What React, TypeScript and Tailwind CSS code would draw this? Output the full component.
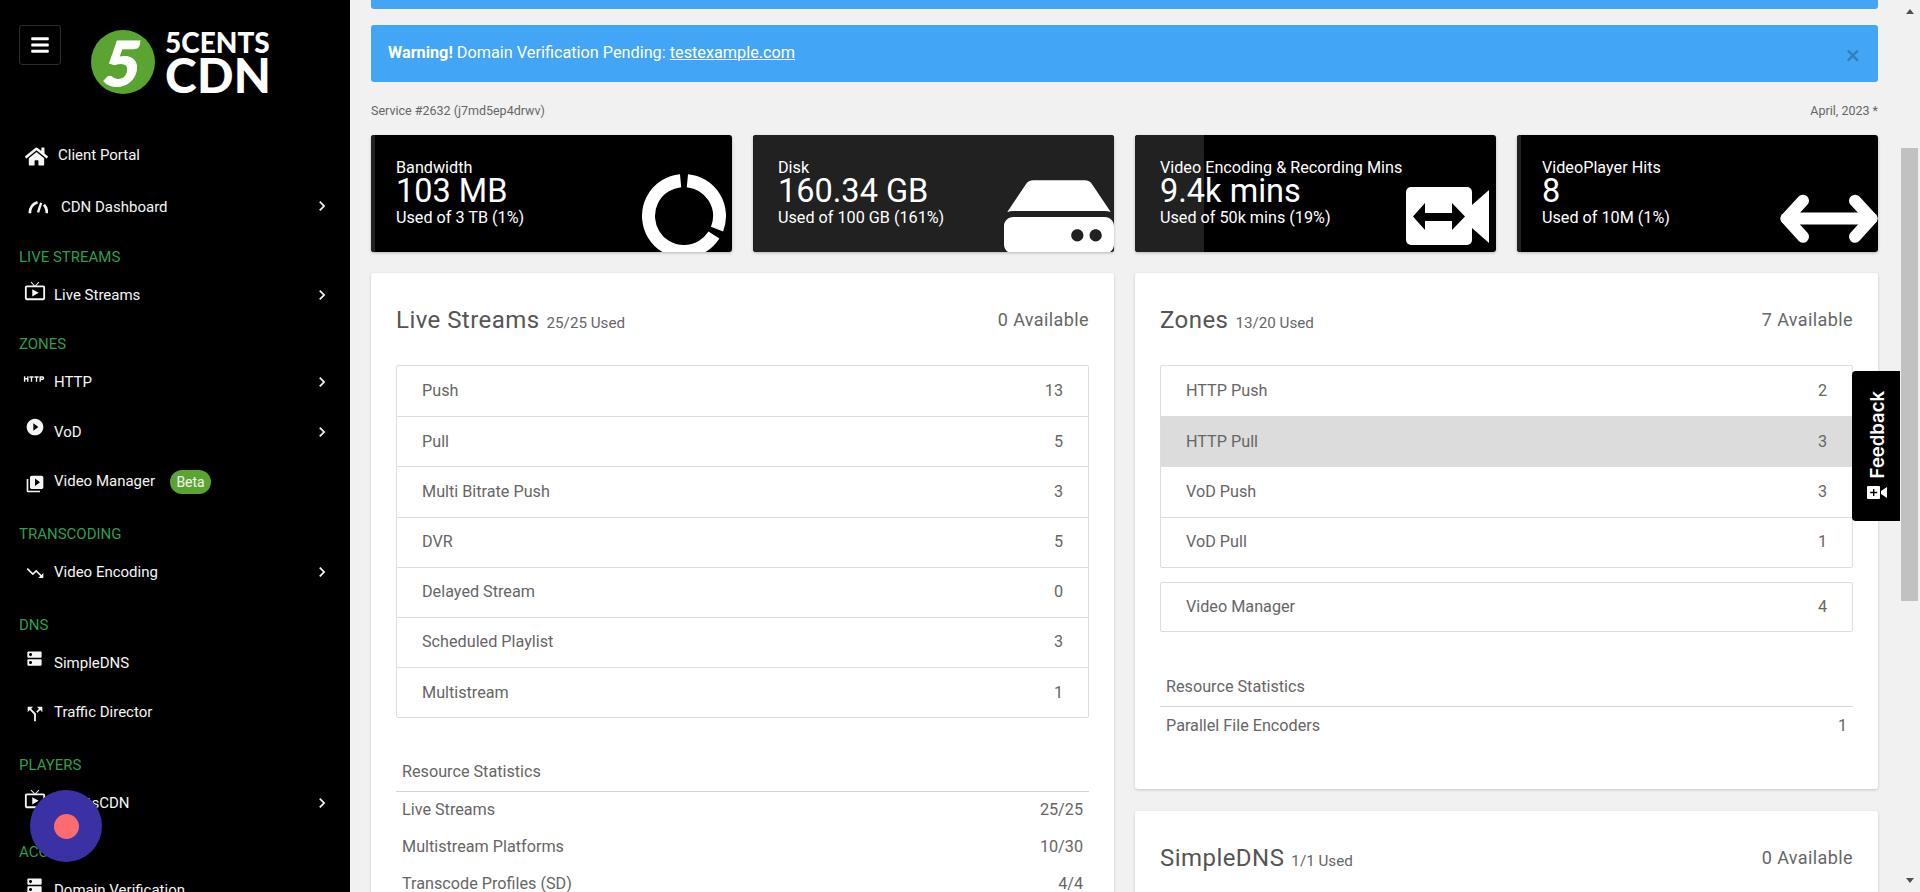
import { FaHome, FaHdd, FaBars } from 'react-icons/fa';
import {
  MdOutlineLiveTv,
  MdHttp,
  MdPlayCircleFilled,
  MdVideoLibrary,
  MdTrendingDown,
  MdDns,
  MdCallSplit,
  MdChevronRight,
} from 'react-icons/md';
import type { ReactNode } from 'react';

const font = "font-['Roboto',sans-serif]";

function GaugeIcon() {
  return (
    <svg viewBox="0 0 22 14" className="h-[14px] w-[20px]" fill="none" stroke="currentColor" strokeWidth="3">
      <path d="M2 14C2 8 5 3.5 10.5 1.8" />
      <path d="M14.5 2.5 L11 13" strokeWidth="2.6" />
      <path d="M17.5 4.5C20 7 20.8 10 20.8 14" />
    </svg>
  );
}

type NavRow = {
  label: string;
  icon?: ReactNode;
  chevron?: boolean;
  chevronClass?: string;
  beta?: boolean;
  rowClass: string;
  textClass?: string;
  iconClass?: string;
};

type NavSection = { title?: string; titleClass?: string; rows: NavRow[] };

const navSections: NavSection[] = [
  {
    rows: [
      { label: 'Client Portal', icon: <FaHome size={23} />, rowClass: 'mt-[34px]', textClass: 'ml-[58px]', iconClass: 'left-[25px] top-[15px]' },
      { label: 'CDN Dashboard', icon: <GaugeIcon />, chevron: true, chevronClass: 'top-[14px]', rowClass: 'mt-[2px]', textClass: 'ml-[61px]', iconClass: 'left-[28px] top-[18px]' },
    ],
  },
  {
    title: 'LIVE STREAMS',
    titleClass: 'mt-[12px]',
    rows: [{ label: 'Live Streams', icon: <MdOutlineLiveTv size={22} />, chevron: true, rowClass: '' }],
  },
  {
    title: 'ZONES',
    titleClass: 'mt-[11px]',
    rows: [
      { label: 'HTTP', icon: <MdHttp size={22} />, chevron: true, rowClass: '', iconClass: 'left-[23px] top-[11px]' },
      { label: 'VoD', icon: <MdPlayCircleFilled size={20} />, chevron: true, rowClass: '', iconClass: 'left-[25px] top-[10px]' },
      { label: 'Video Manager', icon: <MdVideoLibrary size={20} />, beta: true, rowClass: 'pb-[2px]', iconClass: 'left-[25px] top-[17px]' },
    ],
  },
  {
    title: 'TRANSCODING',
    titleClass: 'mt-[14px]',
    rows: [{ label: 'Video Encoding', icon: <MdTrendingDown size={20} />, chevron: true, rowClass: '', iconClass: 'left-[25px] top-[16px]' }],
  },
  {
    title: 'DNS',
    titleClass: 'mt-[15px]',
    rows: [
      { label: 'SimpleDNS', icon: <MdDns size={19} />, rowClass: '', iconClass: 'left-[25px] top-[11px]' },
      { label: 'Traffic Director', icon: <MdCallSplit size={22} />, rowClass: 'mt-[-1px]', iconClass: 'left-[24px] top-[16px]' },
    ],
  },
  {
    title: 'PLAYERS',
    titleClass: 'mt-[15px]',
    rows: [{ label: '5centsCDN', icon: <MdOutlineLiveTv size={22} />, chevron: true, rowClass: '' }],
  },
  {
    title: 'ACCOUNT',
    titleClass: 'mt-[11px]',
    rows: [{ label: 'Domain Verification', icon: <MdDns size={19} />, rowClass: '', iconClass: 'left-[25px] top-[11px]' }],
  },
];

function Sidebar() {
  return (
    <aside className="relative h-[892px] w-[350px] shrink-0 overflow-hidden bg-black text-[#f5f5f5]">
      <div className="flex h-[96px] pt-[25px] pl-[19px]">
        <button className="flex h-[40px] w-[42px] items-center justify-center rounded-[3px] border border-[#2c2c2c] text-white">
          <FaBars size={20} />
        </button>
        <div className="ml-[30px] mt-[5px] flex items-start">
          <div className="flex h-[64px] w-[64px] items-center justify-center rounded-full bg-[#5aa532]">
            <span className="skew-x-[-10deg] font-['Lato',sans-serif] text-[62px] leading-none font-black text-white [-webkit-text-stroke:1px_white]">5</span>
          </div>
          <div className="ml-[10px] flex flex-col font-['Lato',sans-serif] font-black text-white">
            <span className="text-[28px] leading-[24px]">5CENTS</span>
            <span className="text-[48px] leading-[42px] tracking-[0.3px]">CDN</span>
          </div>
        </div>
      </div>
      {navSections.map((section, i) => (
        <div key={i}>
          {section.title && (
            <div className={`flex h-[26px] items-center pl-[19px] text-[15px] text-[#2e9e4f] ${section.titleClass}`}>{section.title}</div>
          )}
          {section.rows.map((row) => (
            <div key={row.label} className={`relative flex h-[50px] items-center text-[15px] ${row.rowClass}`}>
              <span className={`absolute ${row.iconClass ?? 'left-[24px] top-[10px]'}`}>{row.icon}</span>
              <span className={row.textClass ?? 'ml-[54px]'}>{row.label}</span>
              {row.beta && (
                <span className="ml-[15px] mt-[2px] flex h-[24px] w-[41px] items-center justify-center rounded-full bg-[#5aa532] text-[14px]">Beta</span>
              )}
              {row.chevron && <MdChevronRight size={20} className={`absolute left-[312px] ${row.chevronClass ?? 'top-[15px]'}`} />}
            </div>
          ))}
        </div>
      ))}
      <div className="absolute left-[30px] top-[790px] flex h-[72px] w-[72px] items-center justify-center rounded-full bg-[#3a31a5]">
        <div className="h-[25px] w-[25px] rounded-full bg-[#fb6b6f]" />
      </div>
    </aside>
  );
}

function DonutIcon() {
  return (
    <svg viewBox="0 0 84 84" className="h-[84px] w-[84px]" fill="none" stroke="#fff" strokeWidth="13">
      <path d="M45.4 6.66A35.5 35.5 0 0 1 75.03 55.01" />
      <path d="M71.94 61.07A35.5 35.5 0 1 1 38.6 6.66" />
    </svg>
  );
}

function VideoArrowsIcon() {
  return (
    <svg viewBox="0 0 83 58" className="h-[58px] w-[83px]">
      <rect x="0" y="0" width="66" height="58" rx="5" fill="#fff" />
      <path d="M66 18 L83 3 V56 L66 41 Z" fill="#fff" />
      <path d="M7 29.5 L19 16 V26 H46 V16 L59 29.5 L46 43 V34 H19 V43 Z" fill="#000" />
    </svg>
  );
}

function LeftRightIcon() {
  return (
    <svg viewBox="0 0 98 60" className="h-[60px] w-[98px]" fill="none" stroke="#fff" strokeWidth="12" strokeLinecap="round" strokeLinejoin="round">
      <path d="M6.5 30.5H91.5" />
      <path d="M23 12.7 L6.5 30.5 L23 48.7" />
      <path d="M75 12.7 L91.5 30.5 L75 48.7" />
    </svg>
  );
}

function VideoPlusIcon() {
  return (
    <svg viewBox="0 0 20 13" className="h-[13px] w-[20px]">
      <rect x="0" y="0" width="13" height="13" rx="1" fill="#fff" />
      <path d="M6 3H7.4V5.8H10.2V7.2H7.4V10H6V7.2H3.2V5.8H6Z" fill="#000" />
      <path d="M14 5L20 1V12L14 8Z" fill="#fff" />
    </svg>
  );
}

type Stat = { title: string; value: string; sub: string; barClass: string; icon: ReactNode };

const stats: Stat[] = [
  {
    title: 'Bandwidth',
    value: '103 MB',
    sub: 'Used of 3 TB (1%)',
    barClass: 'w-[1%]',
    icon: <span className="absolute left-[271px] top-[39px]"><DonutIcon /></span>,
  },
  {
    title: 'Disk',
    value: '160.34 GB',
    sub: 'Used of 100 GB (161%)',
    barClass: 'w-full',
    icon: <FaHdd size={110} className="absolute right-0 top-[27px] text-white" />,
  },
  {
    title: 'Video Encoding & Recording Mins',
    value: '9.4k mins',
    sub: 'Used of 50k mins (19%)',
    barClass: 'w-[19%]',
    icon: <span className="absolute left-[271px] top-[52px]"><VideoArrowsIcon /></span>,
  },
  {
    title: 'VideoPlayer Hits',
    value: '8',
    sub: 'Used of 10M (1%)',
    barClass: 'w-[1%]',
    icon: <span className="absolute left-[263px] top-[53px]"><LeftRightIcon /></span>,
  },
];

function StatCard({ stat }: { stat: Stat }) {
  return (
    <div className="relative h-[117px] overflow-hidden rounded-[3px] bg-black text-white shadow-[0_1px_3px_rgba(0,0,0,0.25)]">
      <div className={`absolute inset-y-0 left-0 bg-[#212121] ${stat.barClass}`} />
      {stat.icon}
      <div className="relative pl-[25px] pt-[25px]">
        <div className="text-[16.2px] leading-[16px]">{stat.title}</div>
        <div className="text-[32.5px] leading-[31px]">{stat.value}</div>
        <div className="mt-[1px] text-[16.2px] leading-[20px]">{stat.sub}</div>
      </div>
    </div>
  );
}

type Item = { label: string; value: number; active?: boolean };

function ListBox({ items, rowClass = 'h-[50.2px]' }: { items: Item[]; rowClass?: string }) {
  return (
    <div className="rounded-[2px] border border-[#dedede]">
      {items.map((item, i) => (
        <div
          key={item.label}
          className={`flex items-center justify-between px-[25px] text-[16.2px] ${rowClass} ${i > 0 ? 'border-t border-[#dedede]' : ''} ${item.active ? 'bg-[#dcdcdc]' : ''}`}
        >
          <span>{item.label}</span>
          <span>{item.value}</span>
        </div>
      ))}
    </div>
  );
}

function CardHead({ title, used, available }: { title: string; used: string; available: string }) {
  return (
    <div className="flex h-[92px] items-start justify-between">
      <div className="flex items-baseline pt-[32px]">
        <span className="text-[24px] leading-[30px] tracking-[0.45px] text-[#555]">{title}</span>
        <span className="ml-[7px] text-[15.2px] text-[#666]">{used}</span>
      </div>
      <div className="pt-[35px] text-[18px] leading-[24px] tracking-[0.4px] text-[#666]">{available}</div>
    </div>
  );
}

function Stats({ rows }: { rows: [string, string][] }) {
  return (
    <div>
      <div className="border-b border-[#d5d5d5] px-[6px] pb-[7px] text-[16.2px] leading-[24px]">Resource Statistics</div>
      {rows.map(([label, value]) => (
        <div key={label} className="flex h-[37px] items-center justify-between px-[6px] text-[16.2px]">
          <span>{label}</span>
          <span>{value}</span>
        </div>
      ))}
    </div>
  );
}

export default function App() {
  return (
    <div className={`relative flex h-[892px] w-[1920px] overflow-hidden bg-[#f1f1f1] text-[#666] ${font}`}>
      <Sidebar />
      <main className="h-[892px] w-[1551px] shrink-0 overflow-hidden pl-[21px] pr-[23px]">
        <div className="h-[9px] rounded-b-[3px] bg-[#42a5f5]" />
        <div className="mt-[16px] flex h-[57px] items-center justify-between rounded-[3px] bg-[#42a5f5] pl-[17px] pr-[18px] text-[16.25px] text-white">
          <span>
            <strong className="font-bold">Warning!</strong> Domain Verification Pending: <a className="underline">testexample.com</a>
          </span>
          <span className="mt-[3px] text-[26px] leading-none text-[#2f7fb8]">×</span>
        </div>
        <div className="mt-[19px] flex items-center justify-between text-[12.5px] leading-[20px]">
          <span>Service #2632 (j7md5ep4drwv)</span>
          <span>April, 2023 *</span>
        </div>
        <div className="mt-[14px] grid grid-cols-4 gap-[21px]">
          {stats.map((stat) => (
            <StatCard key={stat.title} stat={stat} />
          ))}
        </div>
        <div className="mt-[21px] grid grid-cols-2 gap-[21px]">
          <div className="h-[800px] rounded-[3px] bg-white px-[25px] shadow-[0_1px_3px_rgba(0,0,0,0.18)]">
            <CardHead title="Live Streams" used="25/25 Used" available="0 Available" />
            <ListBox
              items={[
                { label: 'Push', value: 13 },
                { label: 'Pull', value: 5 },
                { label: 'Multi Bitrate Push', value: 3 },
                { label: 'DVR', value: 5 },
                { label: 'Delayed Stream', value: 0 },
                { label: 'Scheduled Playlist', value: 3 },
                { label: 'Multistream', value: 1 },
              ]}
            />
            <div className="mt-[41.5px]">
              <Stats
                rows={[
                  ['Live Streams', '25/25'],
                  ['Multistream Platforms', '10/30'],
                  ['Transcode Profiles (SD)', '4/4'],
                ]}
              />
            </div>
          </div>
          <div>
            <div className="h-[516px] rounded-[3px] bg-white px-[25px] shadow-[0_1px_3px_rgba(0,0,0,0.18)]">
              <CardHead title="Zones" used="13/20 Used" available="7 Available" />
              <ListBox
                items={[
                  { label: 'HTTP Push', value: 2 },
                  { label: 'HTTP Pull', value: 3, active: true },
                  { label: 'VoD Push', value: 3 },
                  { label: 'VoD Pull', value: 1 },
                ]}
              />
              <div className="mt-[14px]">
                <ListBox items={[{ label: 'Video Manager', value: 4 }]} rowClass="h-[48.5px]" />
              </div>
              <div className="mt-[43px]">
                <Stats rows={[['Parallel File Encoders', '1']]} />
              </div>
            </div>
            <div className="mt-[22px] h-[200px] rounded-[3px] bg-white px-[25px] shadow-[0_1px_3px_rgba(0,0,0,0.18)]">
              <CardHead title="SimpleDNS" used="1/1 Used" available="0 Available" />
            </div>
          </div>
        </div>
      </main>
      <div className="flex h-[892px] w-[17px] shrink-0 flex-col items-center">
        <div className="mt-[9px] h-0 w-0 border-x-[4px] border-b-[5px] border-x-transparent border-b-[#505050]" />
        <div className="mt-[134px] h-[453px] w-[17px] bg-[#c1c1c1]" />
        <div className="mt-auto mb-[9px] h-0 w-0 border-x-[4px] border-t-[5px] border-x-transparent border-t-[#505050]" />
      </div>
      <div className="absolute left-[1852px] top-[371px] flex h-[150px] w-[48px] flex-col items-center rounded-l-[4px] bg-black pl-[2px] pt-[20px] text-white">
        <span className="rotate-180 font-['Inter',sans-serif] text-[18.5px] leading-[22px] font-semibold [writing-mode:vertical-rl]">Feedback</span>
        <span className="mt-[8px] flex"><VideoPlusIcon /></span>
      </div>
    </div>
  );
}
